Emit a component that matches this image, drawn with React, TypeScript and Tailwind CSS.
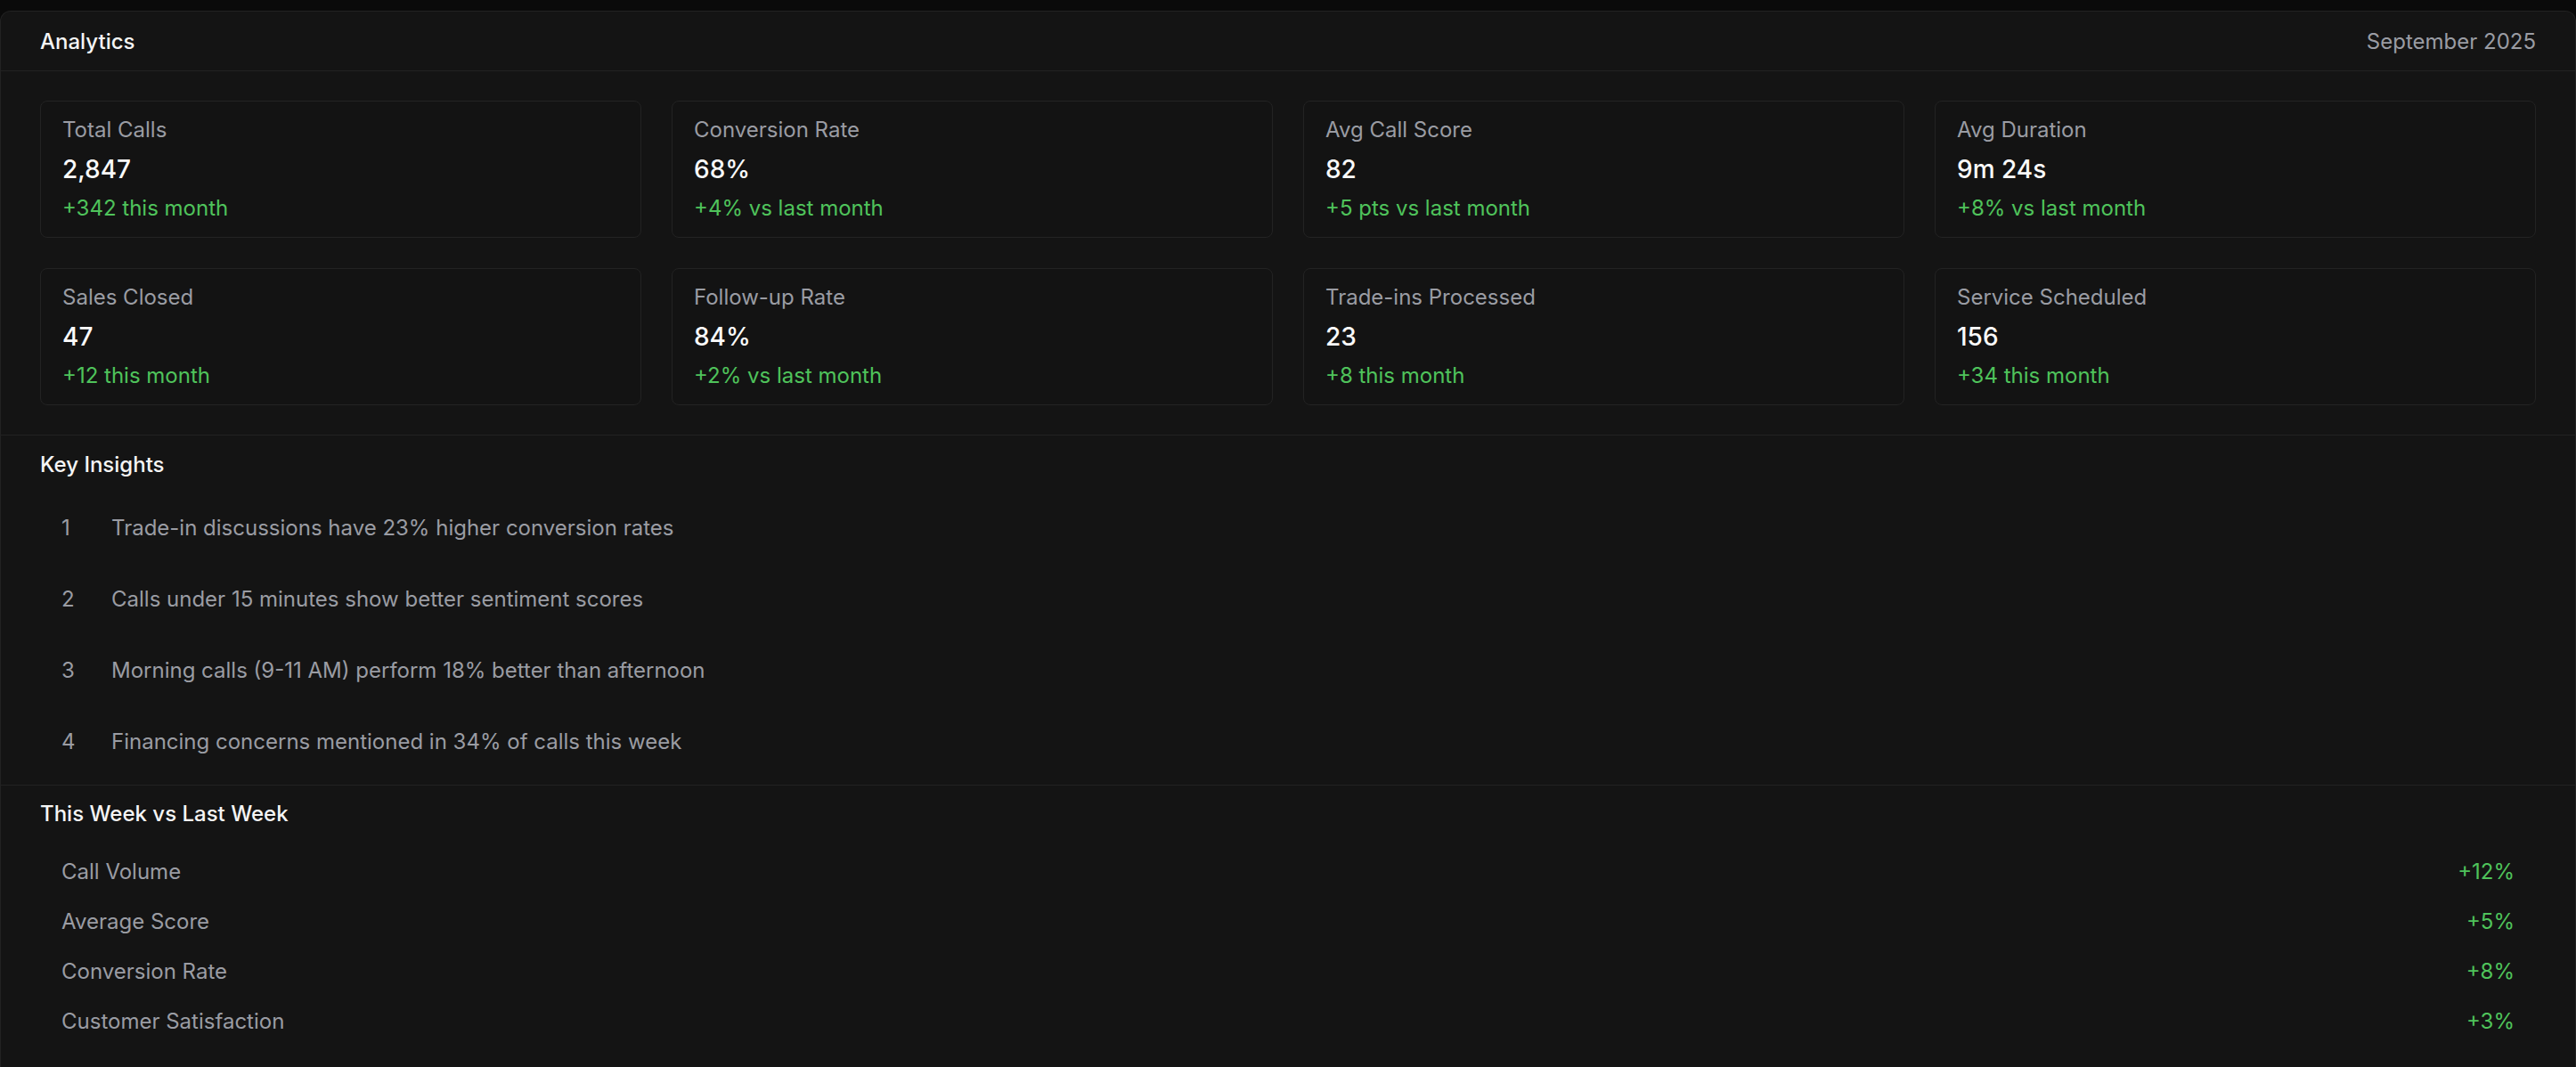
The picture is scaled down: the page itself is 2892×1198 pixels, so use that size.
import React from 'react';

const stats = [
  { label: 'Total Calls', value: '2,847', change: '+342 this month' },
  { label: 'Conversion Rate', value: '68%', change: '+4% vs last month' },
  { label: 'Avg Call Score', value: '82', change: '+5 pts vs last month' },
  { label: 'Avg Duration', value: '9m 24s', change: '+8% vs last month' },
  { label: 'Sales Closed', value: '47', change: '+12 this month' },
  { label: 'Follow-up Rate', value: '84%', change: '+2% vs last month' },
  { label: 'Trade-ins Processed', value: '23', change: '+8 this month' },
  { label: 'Service Scheduled', value: '156', change: '+34 this month' },
];

const insights = [
  'Trade-in discussions have 23% higher conversion rates',
  'Calls under 15 minutes show better sentiment scores',
  'Morning calls (9-11 AM) perform 18% better than afternoon',
  'Financing concerns mentioned in 34% of calls this week',
];

const weekly = [
  { label: 'Call Volume', value: '+12%' },
  { label: 'Average Score', value: '+5%' },
  { label: 'Conversion Rate', value: '+8%' },
  { label: 'Customer Satisfaction', value: '+3%' },
];

export default function App() {
  return (
    <div className="min-h-screen bg-[#0a0a0a] pt-[12px] font-['Inter',sans-serif] antialiased">
      <div className="min-h-[1186px] bg-[#141414] border-t border-x border-[#222222] rounded-t-[12px]">
        {/* header */}
        <div className="h-[67px] px-[44px] flex items-center justify-between border-b border-[#222222]">
          <h1 className="text-[24px] leading-[29px] font-medium text-[#f5f5f5]">Analytics</h1>
          <span className="text-[24px] leading-[29px] text-[#9a9ca3]">September 2025</span>
        </div>

        {/* stat cards */}
        <div className="px-[44px] pt-[33px] pb-[33px] grid grid-cols-4 gap-[34px] border-b border-[#222222]">
          {stats.map(s => (
            <div key={s.label} className="h-[154px] rounded-[8px] border border-[#232323] bg-[#131313] px-[24px] pt-[17px]">
              <div className="text-[24px] leading-[29px] text-[#9a9ca3]">{s.label}</div>
              <div className="mt-[13px] text-[28px] leading-[34px] font-medium text-[#fafafa]">{s.value}</div>
              <div className="mt-[12px] text-[24px] leading-[29px] text-[#4fc35b]">{s.change}</div>
            </div>
          ))}
        </div>

        {/* key insights */}
        <div className="px-[44px] pt-[18px] pb-[9px] border-b border-[#222222]">
          <h2 className="text-[24px] leading-[29px] font-medium text-[#f5f5f5]">Key Insights</h2>
          <div className="mt-[16px]">
            {insights.map((t, i) => (
              <div key={i} className="h-[80px] flex items-center px-[24px] text-[24px] leading-[29px] text-[#9a9ca3]">
                <span className="w-[56px] shrink-0">{i + 1}</span>
                <span>{t}</span>
              </div>
            ))}
          </div>
        </div>

        {/* weekly comparison */}
        <div className="px-[44px] pt-[17px] pb-[20px]">
          <h2 className="text-[24px] leading-[29px] font-medium text-[#f5f5f5]">This Week vs Last Week</h2>
          <div className="mt-[22px]">
            {weekly.map(w => (
              <div key={w.label} className="h-[56px] flex items-center justify-between px-[24px] text-[24px] leading-[29px]">
                <span className="text-[#9a9ca3]">{w.label}</span>
                <span className="text-[#4fc35b]">{w.value}</span>
              </div>
            ))}
          </div>
        </div>
      </div>
    </div>
  );
}
